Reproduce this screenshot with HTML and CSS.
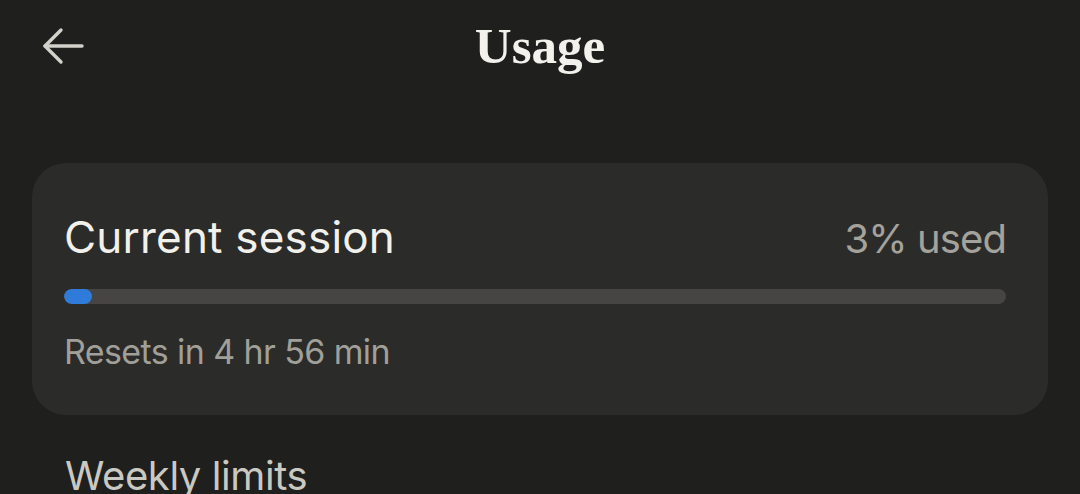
FILE: index.html
```html
<!DOCTYPE html>
<html>
<head>
<meta charset="utf-8">
<link rel="stylesheet" href="styles.css">
</head>
<body>
<div class="screen">
  <header class="topbar">
    <button class="back" aria-label="Back">
      <svg width="42" height="38" viewBox="0 0 42 38" fill="none" stroke="#d2d1ca" stroke-width="3.4" stroke-linecap="round" stroke-linejoin="round">
        <path d="M3 19 H40"/>
        <path d="M19 3 L3 19 L19 35"/>
      </svg>
    </button>
    <h1 class="title">Usage</h1>
  </header>
  <section class="card">
    <div class="row">
      <span class="label">Current session</span>
      <span class="pct">3% used</span>
    </div>
    <div class="track"><div class="fill" style="width:3%"></div></div>
    <div class="reset">Resets in 4 hr 56 min</div>
  </section>
  <h2 class="section">Weekly limits</h2>
</div>
</body>
</html>
```
FILE: styles.css
```css
html, body {
  margin: 0;
  padding: 0;
  background: #1f1f1e;
}
body {
  font-family: "Inter", "Noto Sans", sans-serif;
  width: 1080px;
  height: 494px;
  overflow: hidden;
}
.screen {
  display: flex;
  flex-direction: column;
}
.topbar {
  position: relative;
  height: 95px;
  display: flex;
  align-items: center;
  justify-content: center;
}
.back {
  position: absolute;
  left: 42px;
  top: 27px;
  background: none;
  border: 0;
  padding: 0;
  width: 42px;
  height: 38px;
  display: flex;
}
.title {
  margin: 0;
  font-family: "Liberation Serif", serif;
  font-weight: 700;
  font-size: 51px;
  color: #f2f1ec;
  line-height: 1;
  margin-top: -2px;
}
.card {
  margin: 68px 32px 0 32px;
  height: 252px;
  box-sizing: border-box;
  background: #2b2b2a;
  border-radius: 34px;
  padding: 47px 42px 0 32px;
  display: flex;
  flex-direction: column;
}
.row {
  display: flex;
  justify-content: space-between;
  align-items: baseline;
}
.label {
  font-size: 44px;
  color: #f1f0eb;
  line-height: 54px;
  letter-spacing: 0.2px;
}
.pct {
  font-size: 40px;
  color: #a3a29b;
  line-height: 54px;
  letter-spacing: -0.9px;
}
.track {
  margin-top: 23px;
  height: 15px;
  border-radius: 8px;
  background: #464543;
  overflow: hidden;
}
.fill {
  height: 100%;
  background: #2f7bd9;
  border-radius: 8px;
  min-width: 28px;
}
.reset {
  margin-top: 26px;
  font-size: 34px;
  color: #a09f98;
  line-height: 44px;
  letter-spacing: -0.6px;
}
.section {
  margin: 36px 0 0 65px;
  font-weight: 400;
  font-size: 40px;
  color: #cac9c1;
  line-height: 50px;
  letter-spacing: -0.4px;
}
```
